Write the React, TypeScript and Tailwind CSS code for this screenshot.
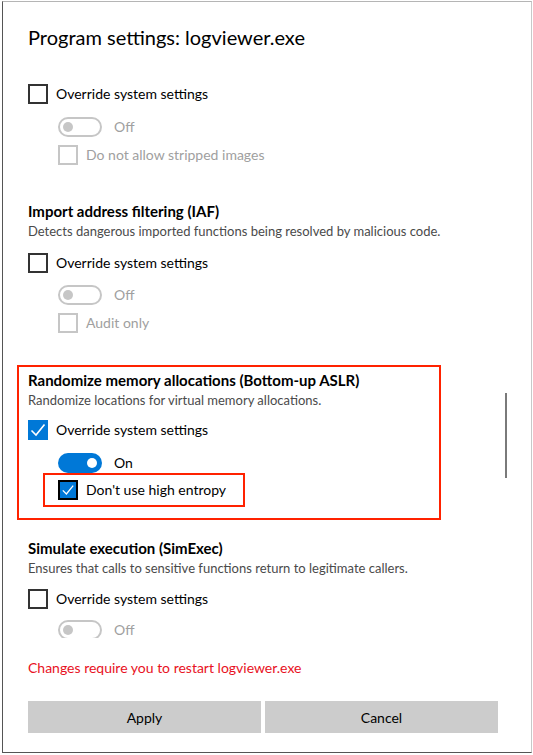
const Check = ({ color = "white" }: { color?: string }) => (
  <svg viewBox="0 0 20 20" className="w-full h-full">
    <path d="M3.5 10.5 L8 15 L16.5 4.5" fill="none" stroke={color} strokeWidth="1.6" />
  </svg>
);

const Box = ({
  checked = false,
  disabled = false,
  focused = false,
}: {
  checked?: boolean;
  disabled?: boolean;
  focused?: boolean;
}) => {
  if (checked) {
    return (
      <div
        className={`w-[20px] h-[20px] shrink-0 bg-[#0078d7] ${
          focused ? "border-2 border-black" : ""
        }`}
      >
        <Check />
      </div>
    );
  }
  return (
    <div
      className={`w-[20px] h-[20px] shrink-0 border-2 ${
        disabled ? "border-[#c6c6c6]" : "border-[#333333]"
      }`}
    />
  );
};

const Toggle = ({ on = false }: { on?: boolean }) =>
  on ? (
    <div className="w-[44px] h-[20px] rounded-full bg-[#0078d7] flex items-center justify-end pr-[5px] shrink-0">
      <div className="w-[10px] h-[10px] rounded-full bg-white" />
    </div>
  ) : (
    <div className="w-[44px] h-[20px] rounded-full border-2 border-[#c6c6c6] flex items-center pl-[3px] shrink-0">
      <div className="w-[10px] h-[10px] rounded-full bg-[#c6c6c6]" />
    </div>
  );

const CheckRow = ({
  label,
  checked,
  disabled,
  focused,
  className = "",
}: {
  label: string;
  checked?: boolean;
  disabled?: boolean;
  focused?: boolean;
  className?: string;
}) => (
  <div className={`flex items-center gap-[8px] h-[20px] whitespace-nowrap ${className}`}>
    <Box checked={checked} disabled={disabled} focused={focused} />
    <span
      className={`text-[14px] leading-[20px] ${
        disabled ? "text-[#a0a0a0]" : "text-black"
      }`}
    >
      {label}
    </span>
  </div>
);

const ToggleRow = ({ on, className = "" }: { on?: boolean; className?: string }) => (
  <div className={`flex items-center gap-[12px] h-[20px] ml-[30px] ${className}`}>
    <Toggle on={on} />
    <span className={`text-[14px] leading-[20px] ${on ? "text-black" : "text-[#a0a0a0]"}`}>
      {on ? "On" : "Off"}
    </span>
  </div>
);

const Heading = ({ title, desc }: { title: string; desc: string }) => (
  <>
    <div className="text-[15px] leading-[20px] font-bold text-black">{title}</div>
    <div className="text-[13px] leading-[20px] text-[#4a4a4a]">{desc}</div>
  </>
);

export default function App() {
  return (
    <div className="w-[533px] h-[755px] bg-white font-['Lato',sans-serif] pt-[1px] pl-[2px]">
      <div className="w-[530px] h-[752px] border-l border-b border-[#555555] border-t border-t-[#b5b5b5] border-r border-r-[#c8c8c8] pl-[25px] flex flex-col">
        <h1 className="mt-[21px] text-[20px] leading-[28px] text-black">
          Program settings: logviewer.exe
        </h1>

        <div className="relative h-[587px] overflow-hidden -ml-[25px] pl-[25px]">
          <CheckRow label="Override system settings" className="mt-[33px]" />
          <ToggleRow className="mt-[13px]" />
          <CheckRow label="Do not allow stripped images" disabled className="mt-[8px] ml-[30px]" />

          <div className="mt-[36px]">
            <Heading
              title="Import address filtering (IAF)"
              desc="Detects dangerous imported functions being resolved by malicious code."
            />
          </div>
          <CheckRow label="Override system settings" className="mt-[12px]" />
          <ToggleRow className="mt-[12px]" />
          <CheckRow label="Audit only" disabled className="mt-[8px] ml-[30px]" />

          <div className="mt-[32px] -ml-[11px] w-[424px] border-2 border-[#ff2200] pt-[3px] pl-[9px] pb-[11px]">
            <Heading
              title="Randomize memory allocations (Bottom-up ASLR)"
              desc="Randomize locations for virtual memory allocations."
            />
            <CheckRow label="Override system settings" checked className="mt-[10px]" />
            <ToggleRow on className="mt-[13px]" />
            <div className="ml-[15px] w-[202px] h-[34px] border-2 border-[#ff2200] pl-[13px] pt-[5px]">
              <CheckRow label="Don't use high entropy" checked focused />
            </div>
          </div>

          <div className="mt-[18px]">
            <Heading
              title="Simulate execution (SimExec)"
              desc="Ensures that calls to sensitive functions return to legitimate callers."
            />
          </div>
          <CheckRow label="Override system settings" className="mt-[11px]" />
          <ToggleRow className="mt-[11px]" />

          <div className="absolute left-[502px] top-[342px] w-[2px] h-[85px] bg-[#7a7a7a]" />
        </div>

        <div className="mt-[20px] text-[14px] leading-[20px] text-[#e81123]">
          Changes require you to restart logviewer.exe
        </div>

        <div className="mt-[23px] flex gap-[4px]">
          <button className="w-[233px] h-[32px] bg-[#cccccc] text-[14px] text-black">Apply</button>
          <button className="w-[233px] h-[32px] bg-[#cccccc] text-[14px] text-black">Cancel</button>
        </div>
      </div>
    </div>
  );
}
